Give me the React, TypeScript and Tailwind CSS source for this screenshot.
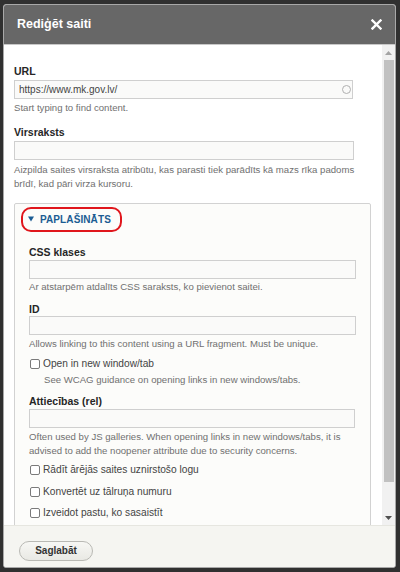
import React from "react";

const font = { fontFamily: '"Liberation Sans", Arial, sans-serif' };

function Label({ children, className = "" }: { children: React.ReactNode; className?: string }) {
  return <div className={`h-[14px] text-[10.5px] leading-[14px] font-bold text-[#262626] ${className}`}>{children}</div>;
}

function Help({ children, className = "" }: { children: React.ReactNode; className?: string }) {
  return <div className={`text-[9.6px] leading-[14px] text-[#707070] ${className}`}>{children}</div>;
}

function Field({ width, value, spinner, className = "" }: { width: string; value?: string; spinner?: boolean; className?: string }) {
  return (
    <div className={`flex h-[19px] items-center justify-between border border-[#cfcfcf] bg-[#fafaf9] pl-[4px] pr-[1px] ${width} ${className}`}>
      <span className="text-[10px] leading-[12px] text-[#444]">{value}</span>
      {spinner && <span className="h-[9px] w-[9px] rounded-full border-[1.5px] border-[#b0b0b0]" />}
    </div>
  );
}

function Check({ children, className = "" }: { children: React.ReactNode; className?: string }) {
  return (
    <label className={`flex h-[14px] items-center gap-[3px] text-[10.2px] leading-[14px] text-[#444] ${className}`}>
      <input type="checkbox" className="ml-[1px] h-[10px] w-[10px] appearance-none rounded-[2px] border border-[#7a7a7a] bg-white" />
      {children}
    </label>
  );
}

export default function App() {
  return (
    <div className="h-[572px] w-[400px] overflow-hidden bg-[#303030] pl-[3px] pt-[4px]" style={font}>
      <div className="flex h-[564px] w-[393px] flex-col overflow-hidden rounded-[3px] border border-[#a8a8a8] bg-white">
        {/* header */}
        <div className="flex h-[40px] shrink-0 items-center justify-between border-b border-[#c8c8c8] bg-[#676767] pl-[13px] pr-[13px]">
          <span className="text-[12.5px] font-bold text-white">Rediģēt saiti</span>
          <svg width="11" height="11" viewBox="0 0 11 11">
            <path d="M1.5 1.5 L9.5 9.5 M9.5 1.5 L1.5 9.5" stroke="white" strokeWidth="2.4" strokeLinecap="square" />
          </svg>
        </div>

        {/* body */}
        <div className="flex min-h-0 flex-1">
          <div className="min-w-0 flex-1 overflow-hidden pl-[10px] pr-[11px] pt-[19px]">
            <Label>URL</Label>
            <Field width="w-[339px]" value="https://www.mk.gov.lv/" spinner className="mt-[2px]" />
            <Help className="mt-[2px]">Start typing to find content.</Help>

            <Label className="mt-[10px]">Virsraksts</Label>
            <Field width="w-[340px]" className="mt-[2px]" />
            <Help className="mt-[3px]">
              Aizpilda saites virsraksta atribūtu, kas parasti tiek parādīts kā mazs rīka padoms brīdī, kad pāri virza kursoru.
            </Help>

            <div className="mt-[12px] rounded-[2px] border border-[#d2d2d2] bg-[#fcfcfa] pb-[20px]">
              <div className="pl-[6px] pt-[1px]">
                <span className="inline-flex h-[25px] w-[101px] items-center gap-[6px] rounded-[10px] border-2 border-[#e0161c] pl-[5px]">
                  <svg width="6" height="6" viewBox="0 0 6 6">
                    <path d="M0 0.5 H6 L3 5.5 Z" fill="#1b5c93" />
                  </svg>
                  <span className="text-[10px] font-bold tracking-[0.1px] text-[#1b5c93]">PAPLAŠINĀTS</span>
                </span>
              </div>

              <div className="px-[14px]">
                <Label className="mt-[13px]">CSS klases</Label>
                <Field width="w-[327px]" className="mt-[1px]" />
                <Help className="mt-[1px]">Ar atstarpēm atdalīts CSS saraksts, ko pievienot saitei.</Help>

                <Label className="mt-[8px]">ID</Label>
                <Field width="w-[327px]" />
                <Help className="mt-[2px]">Allows linking to this content using a URL fragment. Must be unique.</Help>

                <Check className="mt-[6px]">Open in new window/tab</Check>
                <Help className="mt-[2px] pl-[15px]">See WCAG guidance on opening links in new windows/tabs.</Help>

                <Label className="mt-[7px]">Attiecības (rel)</Label>
                <Field width="w-[326px]" className="mt-[1px]" />
                <Help className="mt-[2px]">
                  Often used by JS galleries. When opening links in new windows/tabs, it is advised to add the noopener attribute due to security concerns.
                </Help>

                <Check className="mt-[5px]">Rādīt ārējās saites uznirstošo logu</Check>
                <Check className="mt-[8px]">Konvertēt uz tālruņa numuru</Check>
                <Check className="mt-[7px]">Izveidot pastu, ko sasaistīt</Check>
              </div>
            </div>
          </div>

          {/* scrollbar */}
          <div className="flex w-[13px] shrink-0 flex-col items-center bg-[#f1f1f1]">
            <div className="flex h-[15px] items-center justify-center">
              <svg width="7" height="4" viewBox="0 0 7 4">
                <path d="M0 4 L3.5 0 L7 4 Z" fill="#a3a3a3" />
              </svg>
            </div>
            <div className="h-[422px] w-[10px] bg-[#c1c1c1]" />
            <div className="flex-1" />
            <div className="flex h-[15px] items-center justify-center">
              <svg width="7" height="4" viewBox="0 0 7 4">
                <path d="M0 0 L7 0 L3.5 4 Z" fill="#505050" />
              </svg>
            </div>
          </div>
        </div>

        {/* footer */}
        <div className="h-[42px] shrink-0 border-t border-[#e6e6e0] bg-[#f5f5f1] pl-[15px] pt-[11px]">
          <button className="h-[20px] w-[74px] rounded-full border border-[#b9b9b4] bg-gradient-to-b from-[#f7f7f4] to-[#e9e9e4] text-[10px] font-bold text-[#333]">
            Saglabāt
          </button>
        </div>
      </div>
    </div>
  );
}
